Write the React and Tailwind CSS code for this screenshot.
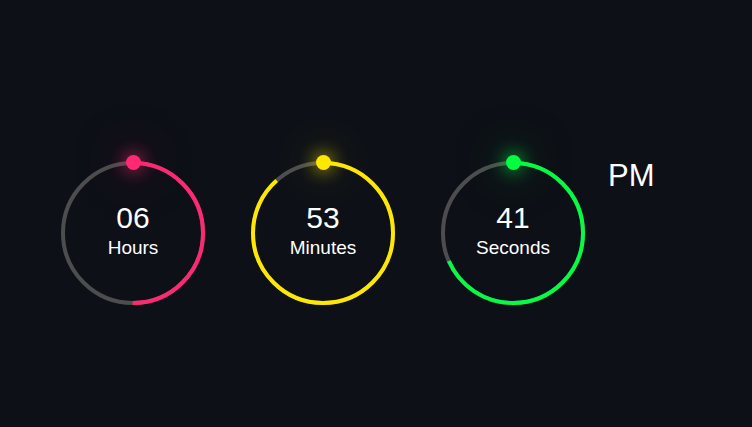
import React from 'react';

const rings = [
  { value: '06', label: 'Hours', progress: 6 / 12, color: '#ff2972', glow: 'shadow-[0_0_18px_#ff2972,0_0_50px_#ff297299]', dot: 'bg-[#ff2972]' },
  { value: '53', label: 'Minutes', progress: 53 / 60, color: '#fee800', glow: 'shadow-[0_0_18px_#fee800,0_0_50px_#fee80099]', dot: 'bg-[#fee800]' },
  { value: '41', label: 'Seconds', progress: 41 / 60, color: '#04fc43', glow: 'shadow-[0_0_18px_#04fc43,0_0_50px_#04fc4399]', dot: 'bg-[#04fc43]' },
];

const CIRC = 2 * Math.PI * 70;

const Ring = ({ value, label, progress, color, glow, dot }) => {
  return (
    <div className="relative w-[150px] h-[150px]">
      <svg width="150" height="150" viewBox="0 0 150 150" className="-rotate-90">
        {/* track */}
        <circle cx="75" cy="75" r="70" fill="none" stroke="#4d4d4f" strokeWidth="4" />
        {/* progress arc */}
        <circle
          cx="75"
          cy="75"
          r="70"
          fill="none"
          stroke={color}
          strokeWidth="4"
          strokeDasharray={CIRC}
          strokeDashoffset={CIRC * (1 - progress)}
        />
      </svg>
      {/* dot at the top */}
      <div className={`absolute left-[68px] top-[-3px] w-[15px] h-[15px] rounded-full ${dot} ${glow}`}></div>
      <div className="absolute inset-0 flex flex-col items-center justify-center gap-[5px] pb-[6px] text-white">
        <span className="text-[30px] leading-none">{value}</span>
        <span className="text-[19px] leading-none">{label}</span>
      </div>
    </div>
  );
};

export default function App() {
  return (
    <div className="w-[752px] h-[427px] bg-[#0d1017] font-['Liberation_Sans',Arial,sans-serif] flex items-start pl-[58px] pt-[158px]">
      <div className="flex gap-10">
        {rings.map((r) => (
          <Ring key={r.label} {...r} />
        ))}
      </div>
      <div className="ml-5 text-white text-[31px] leading-none pt-[2px]">PM</div>
    </div>
  );
}
